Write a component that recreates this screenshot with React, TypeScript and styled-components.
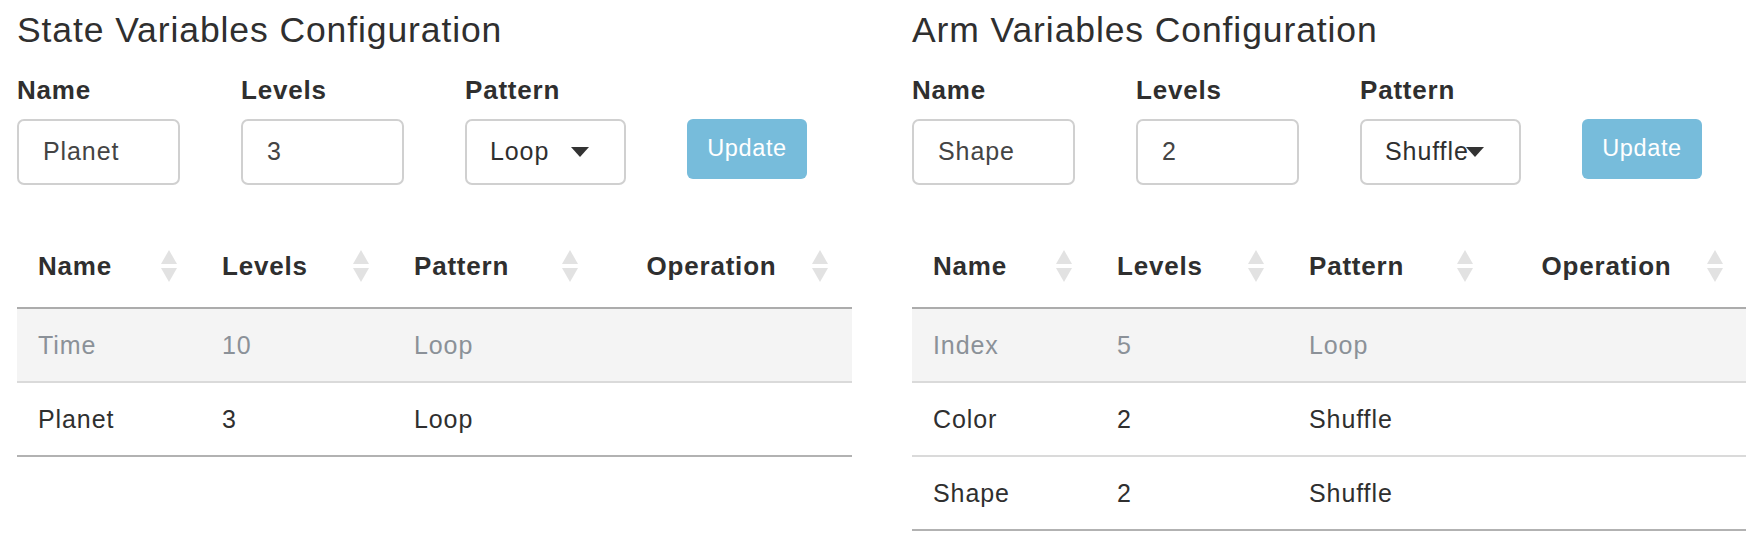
import React from 'react'
import styled, { createGlobalStyle } from 'styled-components'

const GlobalStyle = createGlobalStyle`
  html,
  body {
    margin: 0;
    padding: 0;
    background: #fff;
  }
  body {
    font-family: 'Liberation Sans', Arial, Helvetica, sans-serif;
    color: #2f2f2f;
    overflow: hidden;
  }
`

const Page = styled.div`
  display: flex;
  gap: 60px;
  width: max-content;
  padding: 10px 0 0 17px;
`

const Panel = styled.section`
  flex: none;
  width: 835px;
`

const Title = styled.h2`
  margin: 0;
  font-size: 35.5px;
  line-height: 40px;
  font-weight: 400;
  letter-spacing: 0.9px;
  color: #2f2f2f;
`

const Form = styled.div`
  display: grid;
  grid-template-columns: 163px 163px 161px 120px;
  column-gap: 61px;
  row-gap: 14px;
  margin-top: 25px;
  align-items: start;
`

const Label = styled.label`
  font-size: 26px;
  line-height: 30px;
  font-weight: 700;
  letter-spacing: 0.8px;
  color: #2f2f2f;
`

const TextInput = styled.input`
  box-sizing: border-box;
  width: 100%;
  height: 66px;
  margin: 0;
  padding: 0 0 2px 24px;
  border: 2px solid #d0d0d0;
  border-radius: 7px;
  background: #fff;
  font-family: inherit;
  font-size: 25px;
  letter-spacing: 0.9px;
  color: #444;
  outline: none;
`

const SelectBox = styled.div`
  position: relative;
  box-sizing: border-box;
  height: 66px;
  padding: 0 0 2px 23px;
  display: flex;
  align-items: center;
  border: 2px solid #d0d0d0;
  border-radius: 7px;
  font-size: 25px;
  letter-spacing: 0.9px;
  color: #2f2f2f;
  white-space: nowrap;
`

const Caret = styled.span`
  position: absolute;
  right: 35px;
  top: 26px;
  width: 0;
  height: 0;
  border-left: 9.5px solid transparent;
  border-right: 9.5px solid transparent;
  border-top: 10px solid #333;
`

const UpdateButton = styled.button`
  grid-row: 2;
  grid-column: 4;
  width: 120px;
  height: 60px;
  border: none;
  border-radius: 6px;
  background: #77bcdb;
  color: #fff;
  font-family: inherit;
  font-size: 23.5px;
  letter-spacing: 0.6px;
  padding: 0 0 2px;
  cursor: pointer;
`

const Table = styled.table`
  width: 835px;
  margin-top: 40px;
  table-layout: fixed;
  border-collapse: collapse;
`

const Th = styled.th`
  padding: 25px 24px 25px 21px;
  border-bottom: 2px solid #acacac;
  font-size: 26px;
  line-height: 30px;
  font-weight: 700;
  letter-spacing: 0.8px;
  color: #2f2f2f;
`

const ThInner = styled.div<{ $center?: boolean }>`
  display: flex;
  align-items: center;
  gap: 12px;
  span {
    flex: 1;
    text-align: ${(p) => (p.$center ? 'center' : 'left')};
  }
`

const Row = styled.tr<{ $muted?: boolean; $last?: boolean }>`
  background: ${(p) => (p.$muted ? '#f4f4f4' : '#fff')};
  color: ${(p) => (p.$muted ? '#8b9198' : '#2f2f2f')};
  td {
    border-bottom: 2px solid ${(p) => (p.$last ? '#b2b2b2' : '#dadada')};
  }
`

const Td = styled.td`
  height: 72px;
  padding: 0 0 0 21px;
  font-size: 25px;
  line-height: 30px;
  letter-spacing: 0.9px;
  white-space: nowrap;
`

const SortIcon = () => (
  <svg width="16" height="32" viewBox="0 0 16 32" style={{ flex: 'none' }}>
    <polygon points="8,0 16,14 0,14" fill="#e2e2e2" />
    <polygon points="0,18 16,18 8,32" fill="#e2e2e2" />
  </svg>
)

type Variable = { name: string; levels: string; pattern: string; fixed?: boolean }

const columns = [
  { title: 'Name', width: 184 },
  { title: 'Levels', width: 192 },
  { title: 'Pattern', width: 209 },
  { title: 'Operation', width: 250, center: true },
]

const ConfigPanel = ({
  title,
  name,
  levels,
  pattern,
  rows,
}: {
  title: string
  name: string
  levels: string
  pattern: string
  rows: Variable[]
}) => (
  <Panel>
    <Title>{title}</Title>
    <Form>
      <Label>Name</Label>
      <Label>Levels</Label>
      <Label>Pattern</Label>
      <span />
      <TextInput defaultValue={name} />
      <TextInput defaultValue={levels} />
      <SelectBox>
        {pattern}
        <Caret />
      </SelectBox>
      <UpdateButton>Update</UpdateButton>
    </Form>
    <Table>
      <colgroup>
        {columns.map((c) => (
          <col key={c.title} style={{ width: c.width }} />
        ))}
      </colgroup>
      <thead>
        <tr>
          {columns.map((c) => (
            <Th key={c.title}>
              <ThInner $center={c.center}>
                <span>{c.title}</span>
                <SortIcon />
              </ThInner>
            </Th>
          ))}
        </tr>
      </thead>
      <tbody>
        {rows.map((r, i) => (
          <Row key={r.name} $muted={r.fixed} $last={i === rows.length - 1}>
            <Td>{r.name}</Td>
            <Td>{r.levels}</Td>
            <Td>{r.pattern}</Td>
            <Td />
          </Row>
        ))}
      </tbody>
    </Table>
  </Panel>
)

export default function App() {
  return (
    <>
      <GlobalStyle />
      <Page>
        <ConfigPanel
          title="State Variables Configuration"
          name="Planet"
          levels="3"
          pattern="Loop"
          rows={[
            { name: 'Time', levels: '10', pattern: 'Loop', fixed: true },
            { name: 'Planet', levels: '3', pattern: 'Loop' },
          ]}
        />
        <ConfigPanel
          title="Arm Variables Configuration"
          name="Shape"
          levels="2"
          pattern="Shuffle"
          rows={[
            { name: 'Index', levels: '5', pattern: 'Loop', fixed: true },
            { name: 'Color', levels: '2', pattern: 'Shuffle' },
            { name: 'Shape', levels: '2', pattern: 'Shuffle' },
          ]}
        />
      </Page>
    </>
  )
}
